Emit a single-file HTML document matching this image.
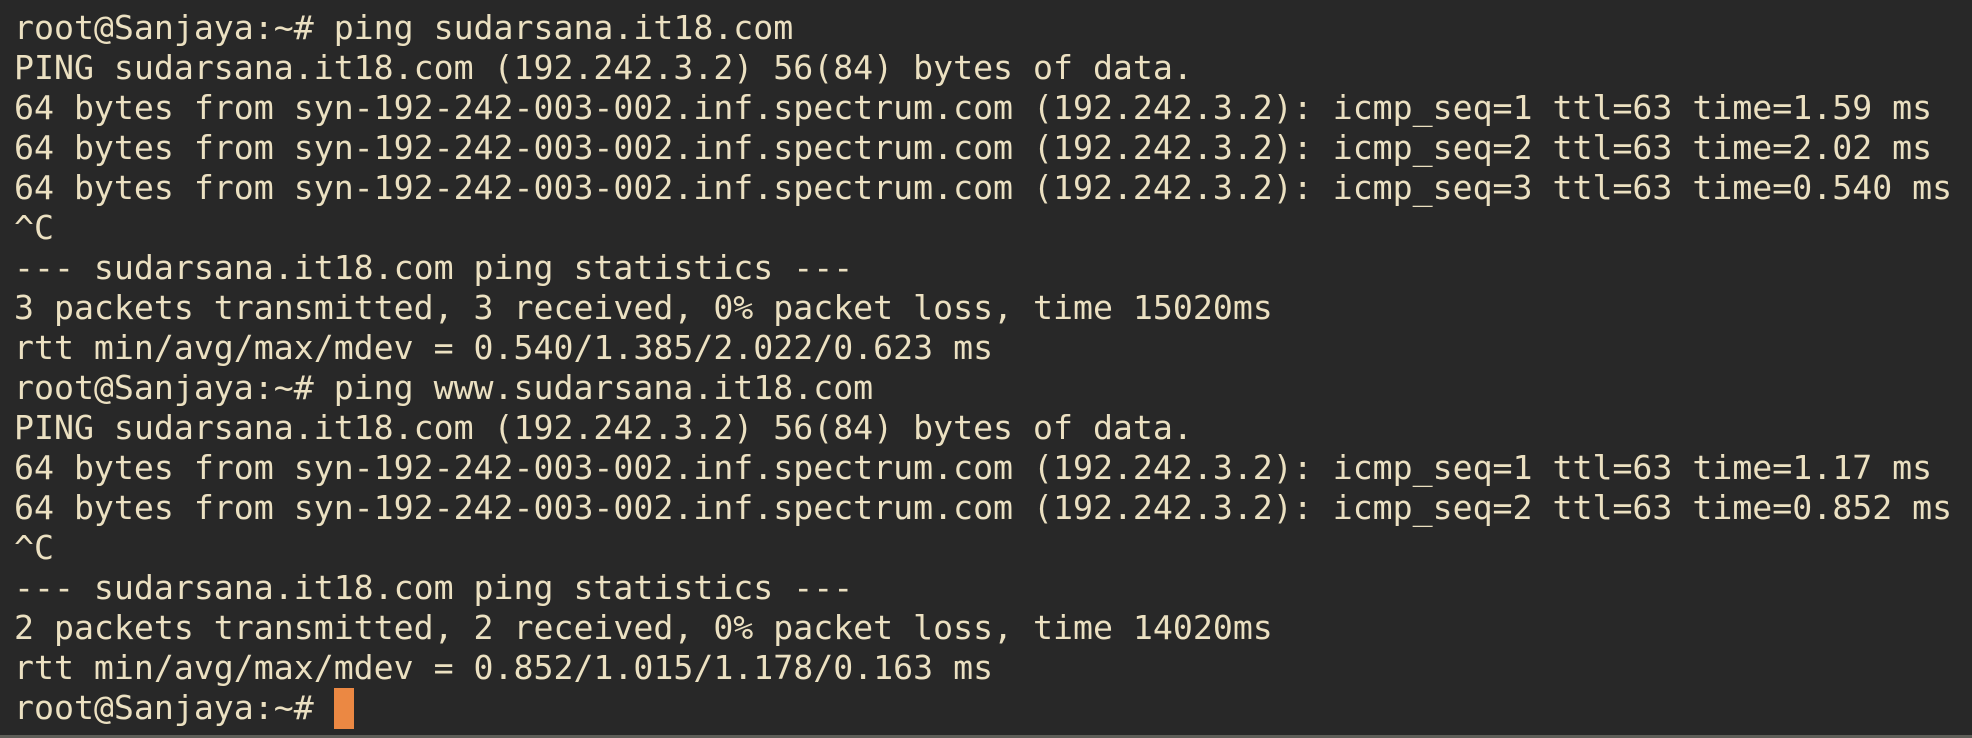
<!DOCTYPE html>
<html><head><meta charset="utf-8"><style>
html,body{margin:0;padding:0}
body{width:1972px;height:738px;background:#282828;position:relative;overflow:hidden}
pre{position:absolute;left:14px;top:8px;margin:0;font-family:"DejaVu Sans Mono","Liberation Mono",monospace;font-size:33.2px;line-height:40px;color:#ebe0c1;letter-spacing:0}
.cur{position:absolute;left:334px;top:688px;width:20px;height:41px;background:#eb8843}
.bot{position:absolute;left:0;bottom:0;width:1972px;height:3px;background:#5e5e58}
</style></head><body>
<pre>root@Sanjaya:~# ping sudarsana.it18.com
PING sudarsana.it18.com (192.242.3.2) 56(84) bytes of data.
64 bytes from syn-192-242-003-002.inf.spectrum.com (192.242.3.2): icmp_seq=1 ttl=63 time=1.59 ms
64 bytes from syn-192-242-003-002.inf.spectrum.com (192.242.3.2): icmp_seq=2 ttl=63 time=2.02 ms
64 bytes from syn-192-242-003-002.inf.spectrum.com (192.242.3.2): icmp_seq=3 ttl=63 time=0.540 ms
^C
--- sudarsana.it18.com ping statistics ---
3 packets transmitted, 3 received, 0% packet loss, time 15020ms
rtt min/avg/max/mdev = 0.540/1.385/2.022/0.623 ms
root@Sanjaya:~# ping www.sudarsana.it18.com
PING sudarsana.it18.com (192.242.3.2) 56(84) bytes of data.
64 bytes from syn-192-242-003-002.inf.spectrum.com (192.242.3.2): icmp_seq=1 ttl=63 time=1.17 ms
64 bytes from syn-192-242-003-002.inf.spectrum.com (192.242.3.2): icmp_seq=2 ttl=63 time=0.852 ms
^C
--- sudarsana.it18.com ping statistics ---
2 packets transmitted, 2 received, 0% packet loss, time 14020ms
rtt min/avg/max/mdev = 0.852/1.015/1.178/0.163 ms
root@Sanjaya:~# </pre>
<div class="cur"></div>
<div class="bot"></div>
</body></html>
